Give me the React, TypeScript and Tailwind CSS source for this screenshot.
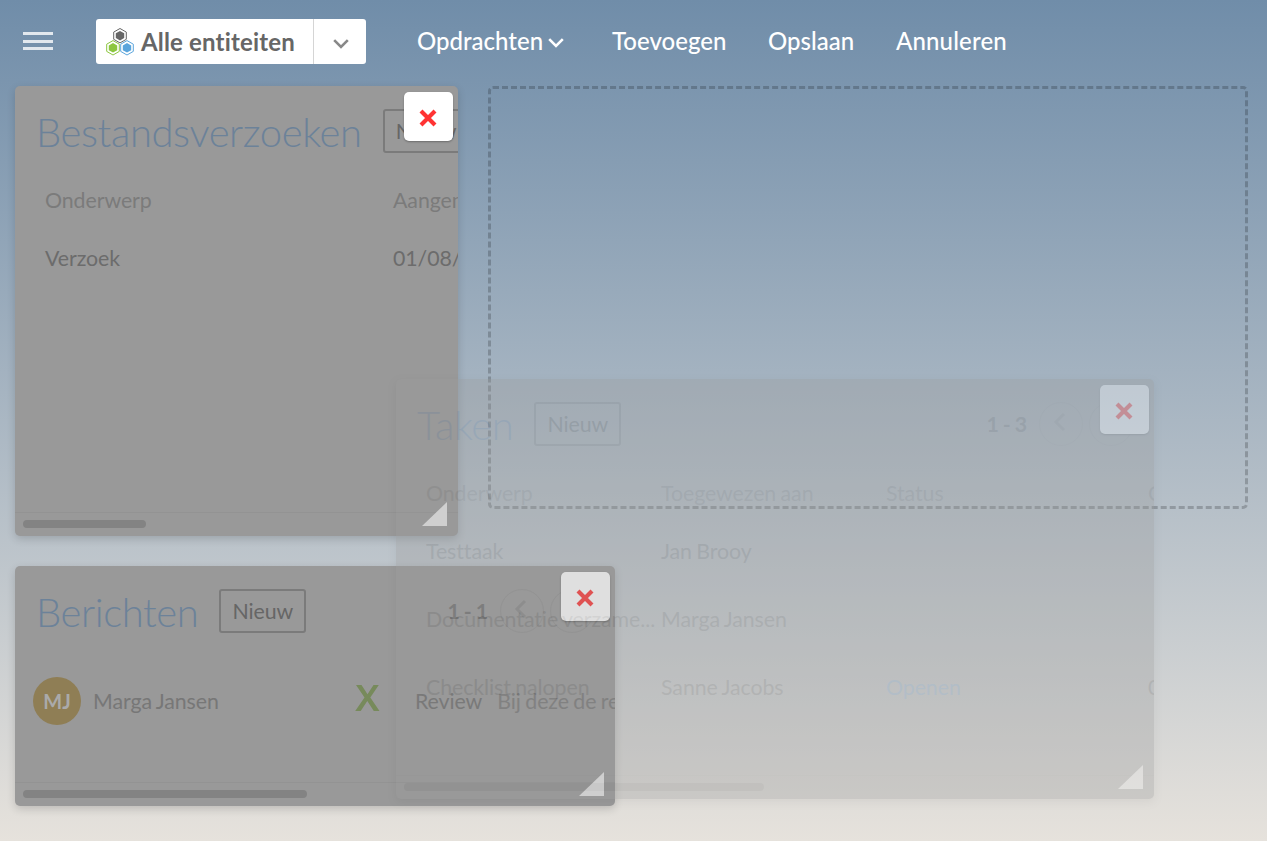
import type { ReactNode } from 'react';

function Hexagon({ x, y, color }: { x: number; y: number; color: string }) {
  return (
    <g transform={`translate(${x} ${y})`} fill={color}>
      <path d="M0-7.2 6.3-3.6V3.6L0 7.2-6.3 3.6V-3.6Z" fill="white" stroke={color} strokeWidth="1" />
      <path d="M0-4.8 4.2-2.4V2.4L0 4.8-4.2 2.4V-2.4Z" />
    </g>
  );
}

function Chevron({ className }: { className: string }) {
  return (
    <svg className={className} viewBox="0 0 16 10" fill="none" stroke="currentColor" strokeWidth="2.6">
      <path d="M1.2 1.2 8 8 14.8 1.2" />
    </svg>
  );
}

function PagerButton() {
  return (
    <span className="flex size-11 shrink-0 items-center justify-center rounded-full border border-[#919191]">
      <svg className="h-5 w-4 -translate-x-px -translate-y-0.5" viewBox="0 0 16 20" fill="none" stroke="#898989" strokeWidth="3">
        <path d="M12 2 4 10 12 18" />
      </svg>
    </span>
  );
}

type WidgetProps = {
  title: string;
  range?: string;
  className: string;
  scrollbar: string;
  children: ReactNode;
};

function Widget({ title, range, className, scrollbar, children }: WidgetProps) {
  return (
    <section className={`${className} shrink-0 rounded-[5px] bg-[#999] shadow-[0_3px_8px_rgba(0,0,0,0.16)]`}>
      <div className="flex size-full flex-col overflow-hidden rounded-[5px] whitespace-nowrap">
        <header className="flex h-[92px] shrink-0 items-start pt-[23px] pr-[21px] pl-[21px]">
          <h2 className="shrink-0 text-[40px] leading-[46px] font-light tracking-[-0.4px] text-[#6c8299]">{title}</h2>
          <button className="ml-[21px] flex h-11 w-[87px] shrink-0 items-center justify-center rounded-[3px] border-2 border-[#7b7b7b] pt-0.5 text-[21.33px] tracking-[-0.1px] text-[#666]">
            Nieuw
          </button>
          {range && (
            <div className="ml-auto flex items-center gap-1.5">
              <span className="mr-[6px] pt-px text-[21.33px] font-bold tracking-[-0.1px] [word-spacing:-1px] text-[#727272]">{range}</span>
              <PagerButton />
              <PagerButton />
            </div>
          )}
        </header>
        <div className="min-h-0 flex-1 overflow-hidden text-[21.33px] tracking-[-0.07px] [word-spacing:-1px] text-[#6c6c6c]">{children}</div>
        <footer className="h-6 shrink-0 border-t border-[#939393] pt-[7px] pl-2">
          <div className={`h-2 rounded-full bg-[#838383] ${scrollbar}`} />
        </footer>
      </div>
      <button className="absolute top-1.5 right-[5px] flex size-[49px] items-center justify-center rounded-[5px] bg-white pt-0.5 pr-px shadow-[0_1px_2px_rgba(0,0,0,0.3)]">
        <svg className="size-[18px]" viewBox="0 0 18 18" stroke="#ff3333" strokeWidth="4.2">
          <path d="M2 2 16 16M16 2 2 16" />
        </svg>
      </button>
      <svg className="absolute right-[11.5px] bottom-2.5 h-6 w-[25px]" viewBox="0 0 25 24" fill="#e7e7e7">
        <path d="M25 0V24H0Z" />
      </svg>
    </section>
  );
}

const tasks = [
  ['Testtaak', 'Jan Brooy', '', ''],
  ['Documentatie verzame...', 'Marga Jansen', '', ''],
  ['Checklist nalopen', 'Sanne Jacobs', 'Openen', '01/08'],
];

export default function App() {
  return (
    <div className="relative h-[841px] w-[1267px] overflow-hidden bg-linear-to-b from-[#708da9] to-[#e6e2dc] font-['Lato',sans-serif] [font-variant-ligatures:none]">
      <nav className="flex h-[86px] items-start pt-[19px] pl-[23px] text-2xl text-white">
        <button className="mt-[13px] flex w-[30px] flex-col gap-[4.5px]">
          <span className="h-[3px] bg-[#e2e8ee]" />
          <span className="h-[3px] bg-[#e2e8ee]" />
          <span className="h-[3px] bg-[#e2e8ee]" />
        </button>
        <div className="ml-[43px] flex h-[45px] w-[270px] rounded-[3px] bg-white text-[#666]">
          <div className="flex w-[218px] items-center border-r border-[#d5d5d5] pl-2.5">
            <svg className="h-7 w-7" viewBox="0 0 28 28">
              <Hexagon x={14} y={7.7} color="#666" />
              <Hexagon x={7} y={19.8} color="#8cc63f" />
              <Hexagon x={21} y={19.8} color="#5ba5dc" />
            </svg>
            <span className="ml-[7px] font-bold tracking-[0.17px]">Alle entiteiten</span>
          </div>
          <div className="flex flex-1 items-center justify-center pt-1 pl-px text-[#888]">
            <Chevron className="h-2.5 w-4" />
          </div>
        </div>
        <div className="-mt-px ml-[51px] flex h-[45px] items-center font-medium whitespace-nowrap">
          <span className="flex w-[195px] items-center">
            Opdrachten
            <Chevron className="mt-1 ml-[5px] h-2.5 w-4" />
          </span>
          <span className="w-[156px]">Toevoegen</span>
          <span className="w-[128px]">Opslaan</span>
          <span className="tracking-[0.15px]">Annuleren</span>
        </div>
      </nav>

      <main className="flex flex-col gap-[30px] px-[15px]">
        <div className="flex h-[450px] gap-[30px]">
          <Widget title="Bestandsverzoeken" className="relative h-[450px] w-[443px]" scrollbar="w-[123px]">
            <div className="grid grid-cols-[348px_200px] pl-[30px]">
              <span className="h-[46px] leading-[44px] text-[#7b7b7b]">Onderwerp</span>
              <span className="h-[46px] leading-[44px] text-[#7b7b7b]">Aangemaakt</span>
              <span className="leading-[68px]">Verzoek</span>
              <span className="leading-[68px]">01/08/2024</span>
            </div>
          </Widget>
          <div className="h-[423px] w-[760px] rounded-[5px] border-3 border-dashed border-black/20" />
        </div>
        <Widget title="Berichten" range="1 - 1" className="relative h-[240px] w-[600px]" scrollbar="w-[284px]">
          <div className="flex h-[86px] items-center pl-[18px]">
            <span className="flex size-12 shrink-0 items-center justify-center rounded-full bg-[#8f7e55] text-xl font-bold text-[#aaa]">MJ</span>
            <span className="ml-3 w-[262px] shrink-0 pt-0.5 text-[#777]">Marga Jansen</span>
            <svg className="-mt-1.5 h-[26px] w-[25px] shrink-0" viewBox="0 0 25 26" fill="#778a5b">
              <path d="M1 0H6.5L12.5 9.3 18.5 0H23.8L15.3 12.6 24.5 26H18.8L12.3 16 5.7 26H.2L9.5 12.6Z" />
            </svg>
            <span className="ml-[35px] shrink-0 pt-0.5">Review</span>
            <span className="ml-[15px] shrink-0 pt-0.5 text-[#777]">Bij deze de reactie</span>
          </div>
        </Widget>
      </main>

      <Widget title="Taken" range="1 - 3" className="absolute top-[379px] left-[396px] h-[420px] w-[758px] opacity-30" scrollbar="w-[360px]">
        <div className="grid grid-cols-[235px_225px_262px_100px] pl-[30px] leading-[68px]">
          <span className="h-[46px] leading-[44px] text-[#7b7b7b]">Onderwerp</span>
          <span className="h-[46px] leading-[44px] text-[#7b7b7b]">Toegewezen aan</span>
          <span className="h-[46px] leading-[44px] text-[#7b7b7b]">Status</span>
          <span className="h-[46px] leading-[44px] text-[#7b7b7b]">Categorie</span>
          {tasks.flatMap((row, r) =>
            row.map((cell, c) => (
              <span key={`${r}-${c}`} className={c === 2 ? 'text-[#6f8eac]' : ''}>{cell}</span>
            )),
          )}
        </div>
      </Widget>
    </div>
  );
}
